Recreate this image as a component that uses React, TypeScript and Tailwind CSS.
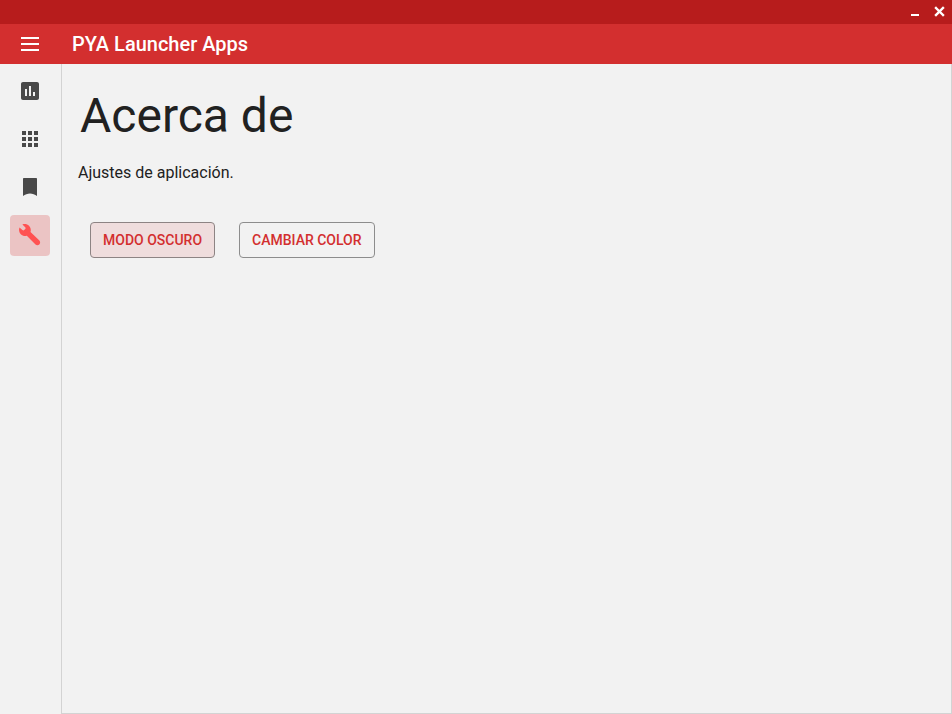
import React from "react";

type IconProps = { path: string };

function Icon({ path }: IconProps) {
  return (
    <svg viewBox="0 0 24 24" className="size-6 fill-current" aria-hidden="true">
      <path d={path} />
    </svg>
  );
}

const menuPath = "M3 19h18v-2H3v2zm0-6h18v-2H3v2zm0-8v2h18V5H3z";

const navItems = [
  {
    label: "Estadísticas",
    active: false,
    path: "M19 3H5c-1.1 0-2 .9-2 2v14c0 1.1.9 2 2 2h14c1.1 0 2-.9 2-2V5c0-1.1-.9-2-2-2zM9 17H7v-7h2v7zm4 0h-2V7h2v10zm4 0h-2v-4h2v4z",
  },
  {
    label: "Aplicaciones",
    active: false,
    path: "M4 8h4V4H4v4zm6 12h4v-4h-4v4zm-6 0h4v-4H4v4zm0-6h4v-4H4v4zm6 0h4v-4h-4v4zm6-10v4h4V4h-4zm-6 4h4V4h-4v4zm6 6h4v-4h-4v4zm0 6h4v-4h-4v4z",
  },
  {
    label: "Marcadores",
    active: false,
    path: "M18 3H6c-.6 0-1 .4-1 1v17c2-1.500 4.500-2.600 7-2.600s5 1.100 7 2.600V4c0-.6-.4-1-1-1z",
  },
  {
    label: "Ajustes",
    active: true,
    path: "M4.400 1.400L7.200 4.200c.6.600.600 1.200 0 1.800L6.200 7c-.6.600-1.200.600-1.800 0L1.500 4.500C.6 6.900 1 9.500 2.800 11.200c1.700 1.700 4 2.100 6 1.500l8.700 8.700c1 1 2.700 1 3.800 0s1.100-2.700.1-3.800L12.500 9.100c.7-2.200.2-4.600-1.500-6.300C9.300 1 6.700.5 4.400 1.400z",
  },
];

function TitleBar() {
  return (
    <div className="flex h-6 items-center justify-end gap-2 bg-[#b71c1c] pr-1 text-white">
      <button type="button" aria-label="Minimizar" className="flex size-4 items-center justify-center">
        <svg viewBox="0 0 16 16" className="size-4" shapeRendering="crispEdges" aria-hidden="true">
          <path d="M3 10h8v2H3z" fill="currentColor" />
        </svg>
      </button>
      <button type="button" aria-label="Cerrar" className="flex size-4 items-center justify-center">
        <svg viewBox="0 0 16 16" className="size-4" aria-hidden="true">
          <path d="M4 4l7 7M11 4l-7 7" stroke="currentColor" strokeWidth="2.400" strokeLinecap="square" />
        </svg>
      </button>
    </div>
  );
}

export default function App() {
  return (
    <div className="flex min-h-screen flex-col bg-[#f2f2f2] font-['Roboto',sans-serif] text-[#212121]">
      <TitleBar />
      <header className="flex h-10 items-center gap-[30px] bg-[#d32f2f] px-[18px] text-white">
        <button type="button" aria-label="Menú">
          <Icon path={menuPath} />
        </button>
        <span className="text-xl font-medium">PYA Launcher Apps</span>
      </header>
      <div className="flex grow">
        <nav className="flex w-[61px] shrink-0 flex-col items-start gap-2 py-[7px] pl-[10px]">
          {navItems.map((item) => (
            <button
              key={item.label}
              type="button"
              aria-label={item.label}
              className={
                item.active
                  ? "flex h-[41px] w-10 items-start justify-center rounded bg-[#ebc4c4] pt-2 text-[#ff5252]"
                  : "flex h-10 w-10 items-start justify-center rounded pt-2 text-[#494949]"
              }
            >
              <Icon path={item.path} />
            </button>
          ))}
        </nav>
        <main className="grow border-r border-b border-l border-[#d3d3d3] px-4 pt-5">
          <h1 className="pl-[2px] text-5xl/[64px] font-normal">Acerca de</h1>
          <p className="pt-[13px] text-base">Ajustes de aplicación.</p>
          <div className="flex gap-6 px-3 pt-[37px]">
            <button type="button" className="h-9 rounded border border-[#8d8484] bg-[#efdddd] px-3 text-sm font-medium text-[#d32f2f]">
              MODO OSCURO
            </button>
            <button type="button" className="h-9 rounded border border-[#8d8d8d] px-3 text-sm font-medium text-[#d32f2f]">
              CAMBIAR COLOR
            </button>
          </div>
        </main>
      </div>
    </div>
  );
}
